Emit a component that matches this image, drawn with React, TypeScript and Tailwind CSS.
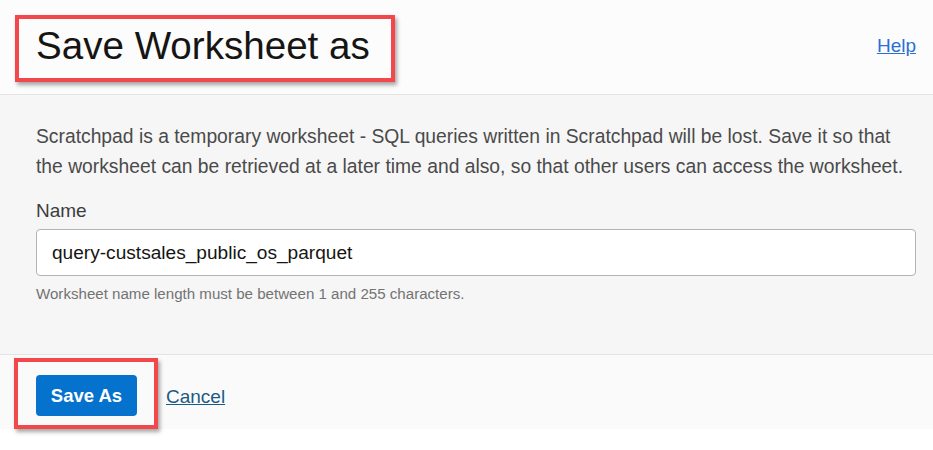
import React, { useState } from 'react';

const App = () => {
  const [name, setName] = useState('query-custsales_public_os_parquet');

  return (
    <div className="relative w-[933px] h-[450px] bg-white font-['Liberation_Sans',Arial,sans-serif]">
      {/* Header */}
      <header className="h-[95px] flex items-center justify-between pl-[36px] pr-[17px] bg-[#fcfcfc] border-b border-[#e4e4e4]">
        <h1 className="text-[38.6px] leading-none text-[#161513] pb-[2px]">Save Worksheet as</h1>
        <a href="#" className="text-[19px] text-[#2b6fd6] underline pb-[2px]">Help</a>
      </header>

      {/* Body */}
      <section className="h-[260px] bg-[#f6f6f6] pl-[36px] pr-[17px] pt-[27px] border-b border-[#e4e4e4]">
        <p className="text-[19.3px] leading-[30px] text-[#4a4a4a]">
          Scratchpad is a temporary worksheet - SQL queries written in Scratchpad will be lost. Save it so that
          the worksheet can be retrieved at a later time and also, so that other users can access the worksheet.
        </p>
        <label className="block mt-[17px] text-[19px] leading-[24px] text-[#3d3d3d]">Name</label>
        <input
          value={name}
          onChange={e => setName(e.target.value)}
          className="mt-[6px] w-full h-[47px] px-[15px] bg-white border border-[#b3b3b3] rounded-[4px] text-[19.1px] text-[#161513] outline-none"
        />
        <p className="mt-[8px] text-[15.1px] leading-[20px] text-[#737373]">
          Worksheet name length must be between 1 and 255 characters.
        </p>
      </section>

      {/* Footer */}
      <footer className="h-[74px] bg-[#fafafa] flex items-start gap-[29px] px-[36px] pt-[20px]">
        <button className="h-[41px] w-[101px] rounded-[4px] bg-[#0572ce] text-white text-[18.5px] font-semibold">
          Save As
        </button>
        <a href="#" className="mt-[8px] text-[19px] text-[#1c5a85] underline">Cancel</a>
      </footer>

      {/* Annotation boxes */}
      <div className="absolute left-[15px] top-[15px] w-[380px] h-[67px] border-4 border-[#f2474b] shadow-[2px_3px_4px_rgba(0,0,0,0.35)] pointer-events-none" />
      <div className="absolute left-[14px] top-[358px] w-[144px] h-[71px] border-4 border-[#f2474b] shadow-[2px_3px_4px_rgba(0,0,0,0.35)] pointer-events-none" />
    </div>
  );
};

export default App;
